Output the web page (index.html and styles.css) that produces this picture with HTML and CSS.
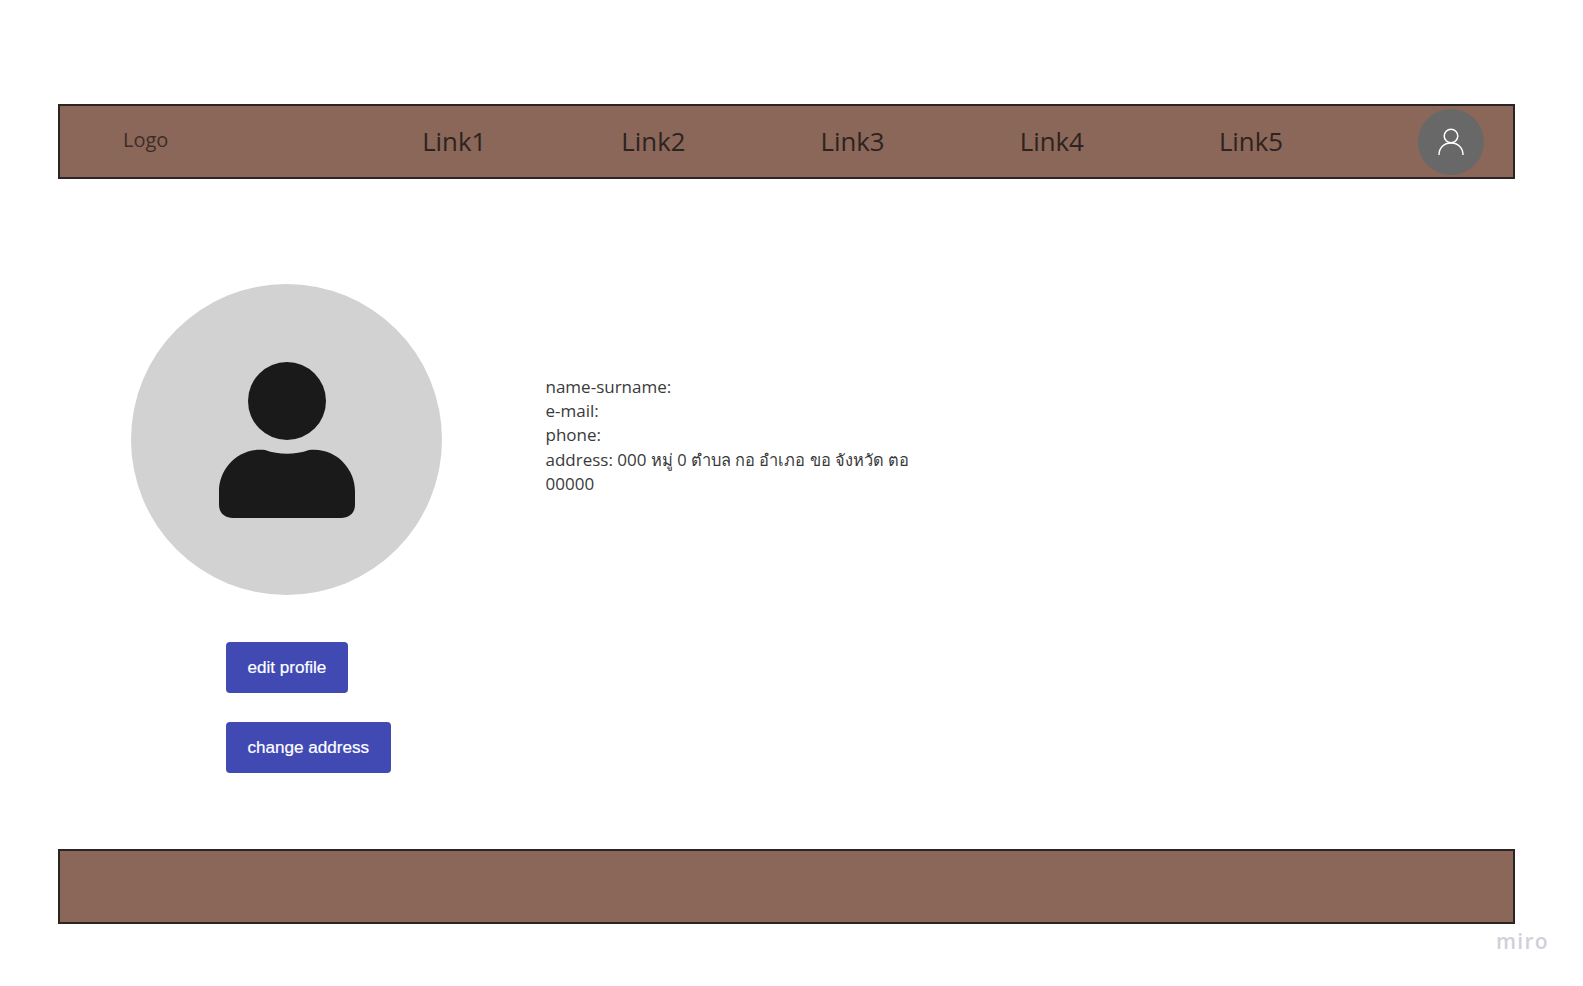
FILE: index.html
```html
<!DOCTYPE html>
<html lang="en">

<head>
    <meta charset="UTF-8">
    <meta name="viewport" content="width=device-width, initial-scale=1.0">
    <title>Profile</title>
    <link rel="stylesheet" href="styles.css">
</head>

<body>

    <header class="navbar">
        <div class="logo">Logo</div>
        <nav class="links">
            <a href="#">Link1</a>
            <a href="#">Link2</a>
            <a href="#">Link3</a>
            <a href="#">Link4</a>
            <a href="#">Link5</a>
        </nav>
        <div class="account">
            <svg width="28" height="28" viewBox="0 0 28 28" fill="none" stroke="#fff" stroke-width="1.5">
                <circle cx="14" cy="8" r="6.8"/>
                <path d="M2 27 C2 19.5 7 15 14 15 C21 15 26 19.5 26 27"/>
            </svg>
        </div>
    </header>

    <main class="profile">
        <section class="left-col">
            <div class="avatar">
                <svg width="136" height="156" viewBox="0 0 136 156">
                    <circle cx="68" cy="39" r="39" fill="#1a1a1a"/>
                    <path fill="#1a1a1a" d="M46 88 C60 93 76 93 90 88 C117 85 136 107 136 129 L136 143 C136 151 130 156 122 156 L14 156 C6 156 0 151 0 143 L0 129 C0 107 19 85 46 88 Z"/>
                </svg>
            </div>
            <a class="btn" href="#">edit profile</a>
            <a class="btn" href="#">change address</a>
        </section>

        <section class="details">
            <p>name-surname:</p>
            <p>e-mail:</p>
            <p>phone:</p>
            <p>address: 000 <span class="thai">หมู่ 0 ตำบล กอ อำเภอ ขอ จังหวัด ตอ</span> 00000</p>
        </section>
    </main>

    <footer class="footer"></footer>

    <div class="watermark">miro</div>

</body>

</html>
```

FILE: styles.css
```css
body {
    font-family: "Open Sans", "Noto Sans", sans-serif;
    margin: 0;
    padding: 104px 0 0 58px;
    background-color: #fff;
    color: #333;
    height: 882px;
    overflow: hidden;
    position: relative;
}

.navbar {
    display: flex;
    align-items: center;
    box-sizing: border-box;
    width: 1457px;
    height: 75px;
    background-color: #8b6759;
    border: 2px solid #2a2523;
    padding: 0 29px 0 63px;
}

.logo {
    width: 299.5px;
    font-size: 20px;
    color: #3d2d28;
    margin-top: -5px;
}

.links {
    display: flex;
    flex: 1;
    margin-top: -2px;
}

.links a {
    width: 199.2px;
    font-size: 25.8px;
    color: #2d2320;
    text-decoration: none;
}

.account {
    display: flex;
    align-items: center;
    justify-content: center;
    width: 66px;
    height: 66px;
    border-radius: 50%;
    background-color: #686868;
}

.profile {
    display: flex;
    box-sizing: border-box;
    height: 670px;
    padding: 105px 0 0 73px;
}

.left-col {
    width: 311px;
}

.avatar {
    display: flex;
    align-items: center;
    justify-content: center;
    width: 311px;
    height: 311px;
    border-radius: 50%;
    background-color: #d2d2d2;
    margin-bottom: 47px;
}

.avatar svg {
    margin-top: 1px;
}

.btn {
    display: table;
    box-sizing: border-box;
    height: 51px;
    line-height: 51px;
    padding: 0 21.5px;
    margin: 0 0 29px 95px;
    border-radius: 4px;
    background-color: #4149b3;
    color: #fff;
    font-family: "Liberation Sans", Arial, sans-serif;
    font-size: 17.1px;
    text-decoration: none;
    -webkit-text-stroke: 0.2px #fff;
}

.details {
    width: 375px;
    margin: 90.9px 0 0 103.5px;
    font-size: 17px;
    line-height: 24.25px;
    color: #3a3a3a;
}

.details p {
    margin: 0;
}

.thai {
    font-size: 16.4px;
}

.footer {
    box-sizing: border-box;
    width: 1457px;
    height: 75px;
    background-color: #8b6759;
    border: 2px solid #2a2523;
}

.watermark {
    position: absolute;
    left: 1496px;
    top: 927px;
    font-size: 21px;
    font-weight: 600;
    letter-spacing: 1.3px;
    color: #d0d0da;
}
```
